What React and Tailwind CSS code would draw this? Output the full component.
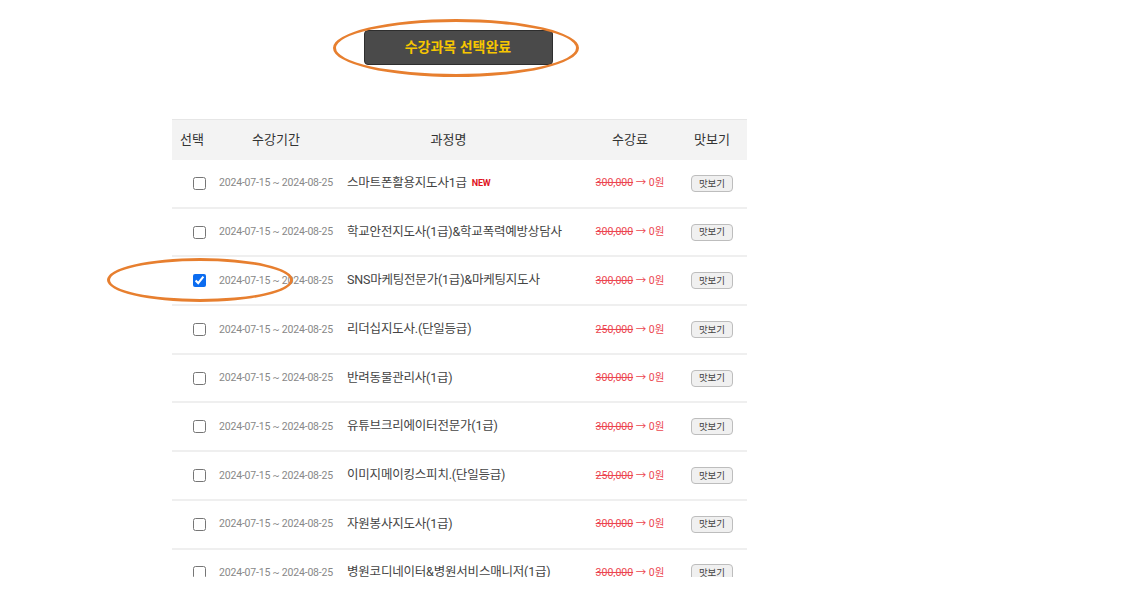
import { useState } from 'react'

const courses = [
  { name: '스마트폰활용지도사1급', price: '300,000', isNew: true },
  { name: '학교안전지도사(1급)&학교폭력예방상담사', price: '300,000' },
  { name: 'SNS마케팅전문가(1급)&마케팅지도사', price: '300,000', checked: true },
  { name: '리더십지도사.(단일등급)', price: '250,000' },
  { name: '반려동물관리사(1급)', price: '300,000' },
  { name: '유튜브크리에이터전문가(1급)', price: '300,000' },
  { name: '이미지메이킹스피치.(단일등급)', price: '250,000' },
  { name: '자원봉사지도사(1급)', price: '300,000' },
  { name: '병원코디네이터&병원서비스매니저(1급)', price: '300,000' },
]

function Row({ course, checked, onToggle }) {
  return (
    <div className="grid grid-cols-[40px_128px_243px_94px_70px] items-center h-[48.7px] border-b-2 border-[#efefef]">
      {/* checkbox */}
      <div className="pl-[21px] flex items-center">
        <input
          type="checkbox"
          checked={checked}
          onChange={onToggle}
          className="w-[13px] h-[13px] m-0 accent-[#0b6cf0]"
        />
      </div>

      <div className="text-center text-[10.5px] text-[#888] tracking-[-0.2px] whitespace-nowrap">
        2024-07-15 ~ 2024-08-25
      </div>

      <div className="pl-[7px] text-[12.5px] tracking-[-0.2px] text-[#444] whitespace-nowrap flex items-center">
        {course.name}
        {course.isNew && (
          <span className="ml-[5px] text-[9px] font-bold text-[#e0141e]">NEW</span>
        )}
      </div>

      <div className="text-center text-[10.5px] text-[#ec4650] whitespace-nowrap">
        <span className="line-through">{course.price}</span> → 0원
      </div>

      <div className="flex justify-center">
        <button className="h-[17px] w-[42px] text-[9.5px] text-[#444] bg-[#f0f0f0] border border-[#bdbdbd] rounded-[4px] leading-none">
          맛보기
        </button>
      </div>
    </div>
  )
}

export default function App() {
  const [checked, setChecked] = useState(courses.map(c => !!c.checked))

  const toggle = (i) => {
    const next = [...checked]
    next[i] = !next[i]
    setChecked(next)
  }

  return (
    <div
      className="relative w-[1134px] h-[605px] bg-white overflow-hidden"
      style={{ fontFamily: "Roboto, 'Noto Sans CJK KR', sans-serif" }}
    >
      <div className="ml-[172px] w-[575px] pt-[30px]">

        {/* Submit button */}
        <div className="flex justify-center pr-[3px]">
          <button className="w-[189px] h-[35px] bg-[#4a4a4a] border border-[#2e2e2e] rounded-[4px] text-[#f7c600] text-[14px] font-bold">
            수강과목 선택완료
          </button>
        </div>

        {/* Table */}
        <div className="mt-[54px] h-[458px] overflow-hidden">
          <div className="grid grid-cols-[40px_128px_243px_94px_70px] items-center h-[41px] bg-[#f3f3f3] border-t border-[#e6e6e6] text-[13px] text-[#333]">
            <div className="text-center">선택</div>
            <div className="text-center">수강기간</div>
            <div className="text-center pr-[26px]">과정명</div>
            <div className="text-center">수강료</div>
            <div className="text-center">맛보기</div>
          </div>

          {courses.map((c, i) => (
            <Row key={i} course={c} checked={checked[i]} onToggle={() => toggle(i)} />
          ))}
        </div>
      </div>

      {/* annotation ellipses */}
      <div className="absolute left-[333px] top-[19px] w-[246px] h-[58px] rounded-[50%] border-[3px] border-[#e77f2f] pointer-events-none" />
      <div className="absolute left-[107px] top-[258px] w-[186px] h-[44px] rounded-[50%] border-[3px] border-[#e77f2f] pointer-events-none" />
    </div>
  )
}
